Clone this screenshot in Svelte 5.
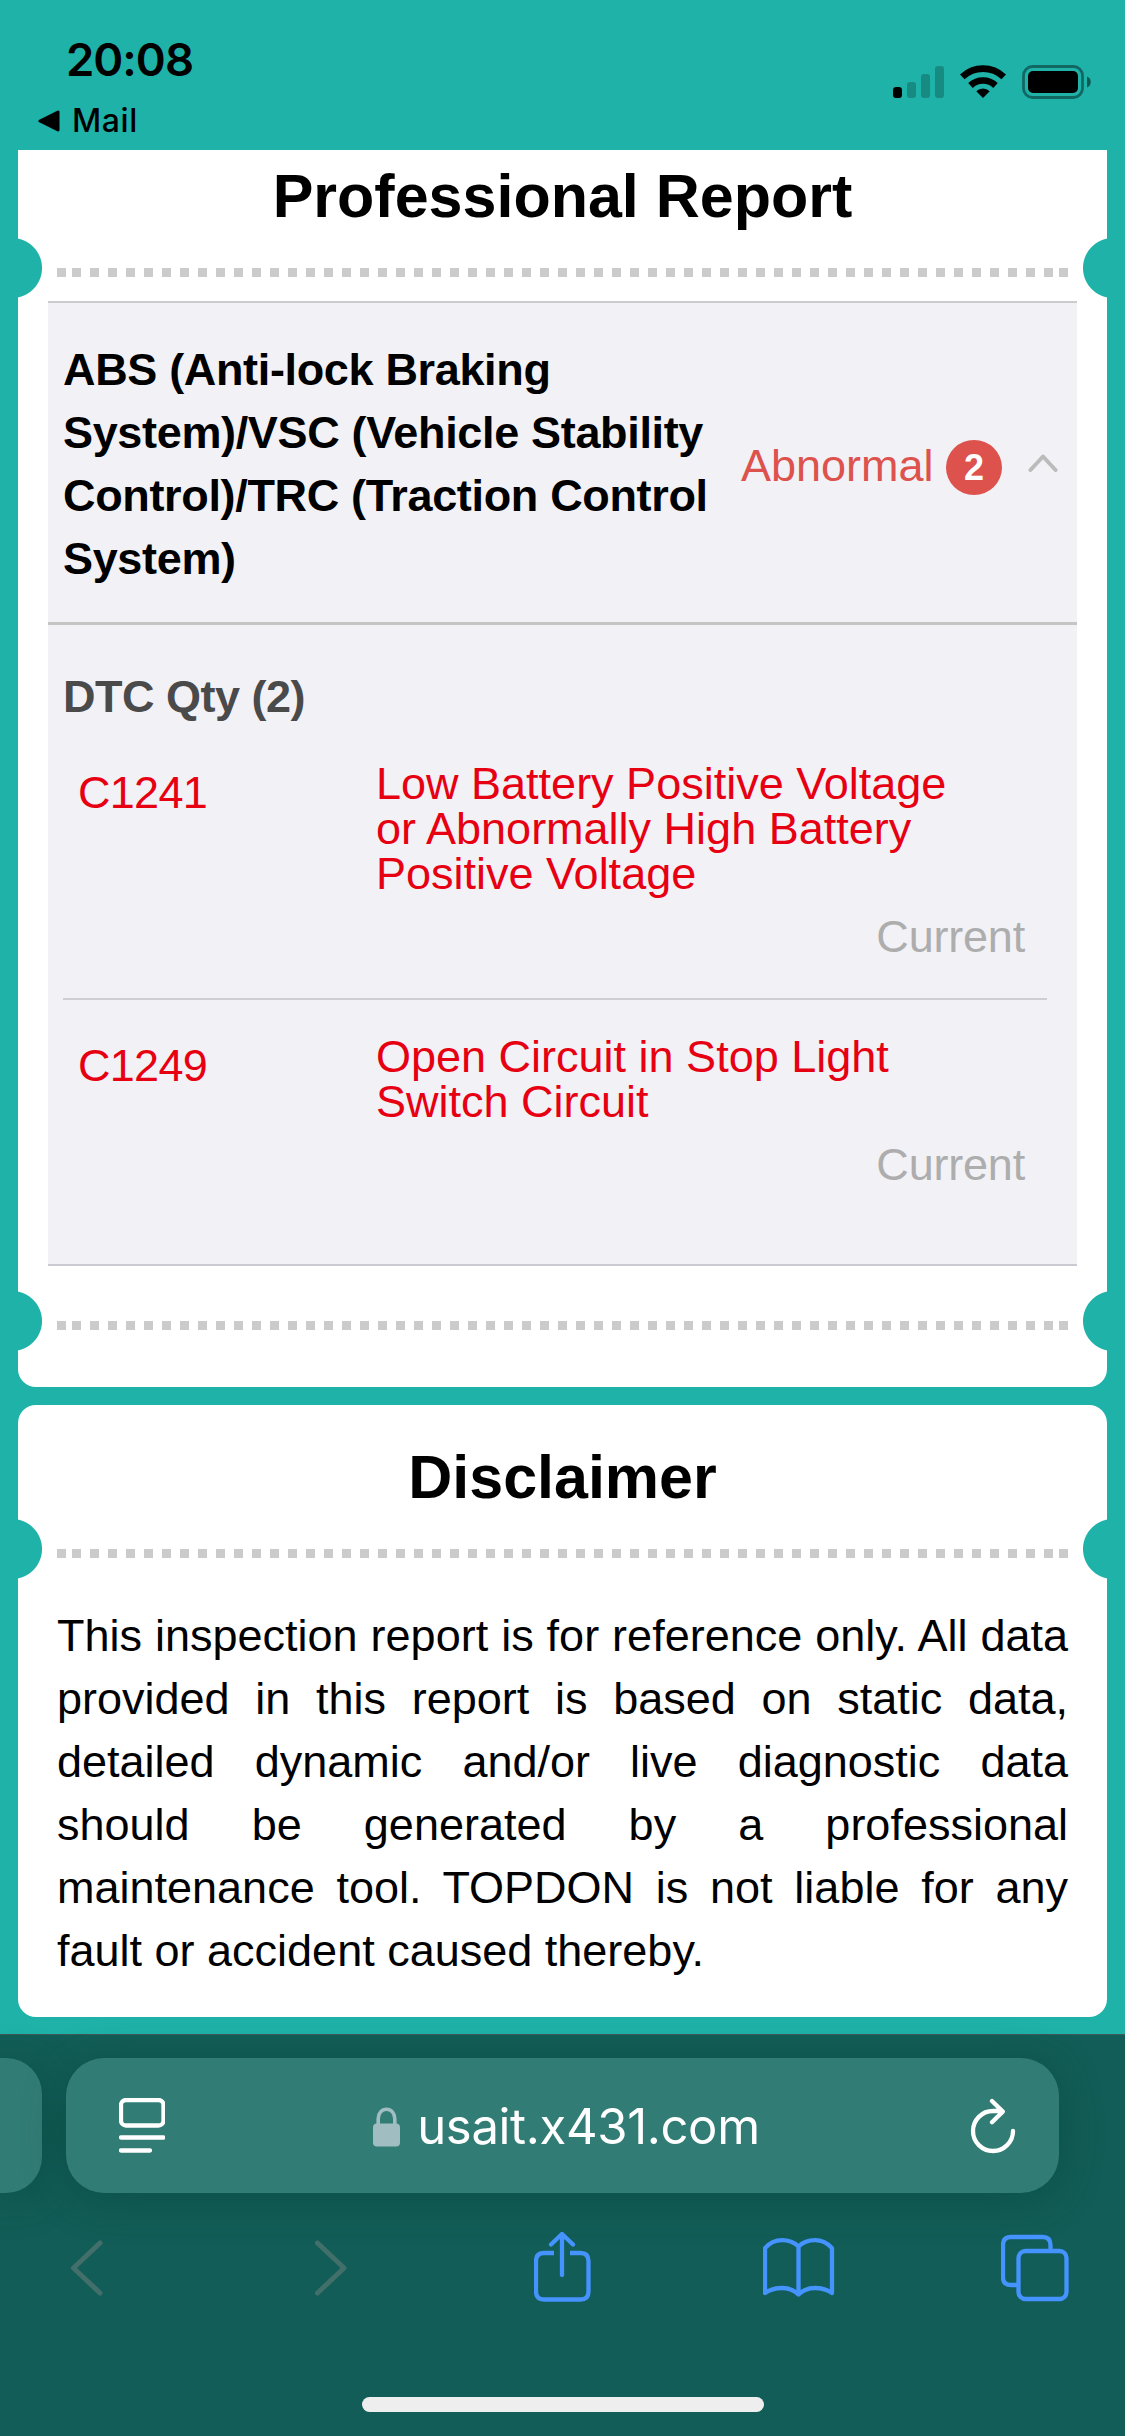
<script lang="ts">
	interface Dtc {
		code: string;
		description: string;
		status: string;
	}

	let expanded = $state(true);

	const system =
		'ABS (Anti-lock Braking System)/VSC (Vehicle Stability Control)/TRC (Traction Control System)';

	const dtcs: Dtc[] = [
		{
			code: 'C1241',
			description: 'Low Battery Positive Voltage or Abnormally High Battery Positive Voltage',
			status: 'Current'
		},
		{
			code: 'C1249',
			description: 'Open Circuit in Stop Light Switch Circuit',
			status: 'Current'
		}
	];
</script>

{#snippet perforation()}
	<div class="perforation">
		<div class="dots"></div>
	</div>
{/snippet}

<div class="screen">
	<header class="status-bar">
		<div class="status-left">
			<div class="time">20:08</div>
			<div class="back-to">
				<svg width="22" height="22" viewBox="0 0 22 22">
					<path d="M2 11 20 2v18z" stroke="#000" stroke-width="3" stroke-linejoin="round" />
				</svg>
				<span>Mail</span>
			</div>
		</div>
		<svg class="status-icons" width="200" height="36" viewBox="892 64 200 36">
			<rect x="893" y="87" width="9" height="11" rx="3" />
			<g opacity="0.22">
				<rect x="907" y="82" width="9" height="16" rx="3" />
				<rect x="921" y="74" width="9" height="24" rx="3" />
				<rect x="935" y="66" width="9" height="32" rx="3" />
			</g>
			<g fill="none" stroke="#000" stroke-width="6.6">
				<path d="M962.3 76.9a30 30 0 0 1 41.4 0" />
				<path d="M970.5 85.5a18.2 18.2 0 0 1 25 0" />
			</g>
			<path d="M976.3 91.2a9.7 9.7 0 0 1 13.4 0L983 98z" />
			<rect
				x="1023.5"
				y="66.5"
				width="59"
				height="31"
				rx="9"
				fill="none"
				stroke="#000"
				stroke-opacity="0.42"
				stroke-width="2.8"
			/>
			<rect x="1028" y="71" width="50" height="22" rx="5" />
			<path d="M1087 76.5a5.9 5.9 0 0 1 0 11z" opacity="0.5" />
		</svg>
	</header>

	<main>
		<section class="card report">
			<h1>Professional Report</h1>
			{@render perforation()}
			<div class="panel">
				<button type="button" class="system" onclick={() => (expanded = !expanded)}>
					<span class="system-name">{system}</span>
					<span class="abnormal">Abnormal</span>
					<span class="count">{dtcs.length}</span>
					<svg class="chevron" class:closed={!expanded} width="30" height="20" viewBox="0 0 30 20">
						<path d="M2.5 17 15 3.5 27.5 17" />
					</svg>
				</button>
				{#if expanded}
					<div class="details">
						<h2>DTC Qty ({dtcs.length})</h2>
						{#each dtcs as dtc (dtc.code)}
							<div class="dtc">
								<span class="code">{dtc.code}</span>
								<span class="description">{dtc.description}</span>
								<span class="state">{dtc.status}</span>
							</div>
						{/each}
					</div>
				{/if}
			</div>
			{@render perforation()}
		</section>

		<section class="card disclaimer">
			<h1>Disclaimer</h1>
			{@render perforation()}
			<p>
				This inspection report is for reference only. All data provided in this report is based on
				static data, detailed dynamic and/or live diagnostic data should be generated by a
				professional maintenance tool. TOPDON is not liable for any fault or accident caused
				thereby.
			</p>
		</section>
	</main>

	<footer class="browser">
		<div class="tabs">
			<div class="tab previous"></div>
			<div class="tab address">
				<svg width="46" height="56" viewBox="0 0 46 56" class="white">
					<rect x="2" y="2" width="42.5" height="25.5" rx="5" />
					<path d="M2 39.5h42.5M2 52.5h29" />
				</svg>
				<div class="url">
					<svg width="27" height="40" viewBox="0 0 27 40">
						<path d="M5.2 18v-6.5a8.3 9.3 0 0 1 16.6 0V18" class="shackle" />
						<rect y="16.5" width="27" height="23" rx="4" fill="#a0bdc2" />
					</svg>
					<span>usait.x431.com</span>
				</div>
				<svg width="46" height="56" viewBox="970 2095 46 56" class="white">
					<path d="M1013 2128a20 20 0 1 1-20-20h9M992 2098l10.8 10.6-10.8 10.6" />
				</svg>
			</div>
		</div>
		<nav>
			<svg class="disabled" width="32" height="72" viewBox="71 2232 32 72">
				<path d="M100 2243 73.5 2268l26.5 25" />
			</svg>
			<svg class="disabled" width="32" height="72" viewBox="315 2232 32 72">
				<path d="M317.5 2243 344 2268l-26.5 25" />
			</svg>
			<svg width="57" height="72" viewBox="534 2232 57 72">
				<path
					d="M554 2253h-10q-8 0-8 8v30.5q0 8 8 8h36.500q8 0 8-8V2261q0-8-8-8H570"
					stroke-linecap="butt"
				/>
				<path d="M562 2234v41M551 2244.500l11-10.500 11 10.500" />
			</svg>
			<svg width="72" height="72" viewBox="763 2232 72 72">
				<path
					d="M798.500 2246.500v48M798.500 2246.500q-6.500-6.300-16.500-6.300t-17 8V2293q7-5 17-5t16.500 6.500q6.500-6.500 16.500-6.500t17 5v-44.800q-7-8-17-8t-16.500 6.300"
				/>
			</svg>
			<svg width="69" height="72" viewBox="1001 2232 69 72">
				<rect x="1018.500" y="2251" width="48" height="48" rx="7" />
				<path d="M1050.500 2250v-5q0-8-8-8H1011q-8 0-8 8v32.500q0 7.500 8 7.500h6" />
			</svg>
		</nav>
		<div class="home-indicator"></div>
	</footer>
</div>

<style>
	:global(body) {
		margin: 0;
		background: #1eb2a8;
	}

	.screen {
		display: flex;
		flex-direction: column;
		width: 1125px;
		height: 2436px;
		overflow: hidden;
		background: #1eb2a8;
		color: #000;
		font-family: 'Liberation Sans', Arial, sans-serif;
		font-size: 45px;
	}

	h1,
	h2,
	p {
		margin: 0;
	}

	svg {
		display: block;
		flex: none;
	}

	.status-bar {
		display: flex;
		justify-content: space-between;
		align-items: flex-start;
		height: 150px;
		box-sizing: border-box;
		padding: 0 33px 0 38px;
		font-family: Inter, sans-serif;
	}

	.time {
		padding: 32px 0 0 28px;
		font-size: 45.5px;
		font-weight: 600;
		line-height: 56px;
		letter-spacing: -1px;
	}

	.back-to {
		display: flex;
		align-items: center;
		gap: 12px;
		padding-top: 13px;
		font-size: 32px;
		font-weight: 500;
		line-height: 40px;
		letter-spacing: 0.6px;
	}

	.status-icons {
		margin-top: 64px;
	}

	main {
		display: flex;
		flex-direction: column;
		gap: 18px;
		height: 1884px;
		padding: 0 18px;
		box-sizing: border-box;
	}

	.card {
		background: #fff;
		overflow: hidden;
	}

	.report {
		height: 1237px;
		border-radius: 0 0 18px 18px;
	}

	.disclaimer {
		height: 612px;
		border-radius: 18px;
	}

	h1 {
		height: 88px;
		font-size: 61px;
		line-height: 92px;
		text-align: center;
	}

	.disclaimer h1 {
		padding-top: 26px;
	}

	/* ticket edge: a half-moon cut at each side and a dotted line between */
	.perforation {
		display: flex;
		height: 60px;
		padding: 0 39px;
		background:
			radial-gradient(circle at -6px 30px, #1eb2a8 29.5px, transparent 30.5px),
			radial-gradient(circle at 1095px 30px, #1eb2a8 29.5px, transparent 30.5px);
	}

	.dots {
		flex: 1;
		height: 9px;
		margin-top: 30px;
		background:
			linear-gradient(#cbcbcb, #cbcbcb) 0 0 / 9px 9px no-repeat,
			linear-gradient(#cbcbcb, #cbcbcb) 100% 0 / 9px 9px no-repeat,
			repeating-linear-gradient(90deg, #cbcbcb 0 9px, transparent 9px 18px) 15px 0 / 981px 9px
				no-repeat;
	}

	.panel {
		height: 965px;
		margin: 3px 30px 25px;
		box-sizing: border-box;
		border-top: 2px solid #cbcacd;
		border-bottom: 2px solid #cbcad0;
		background: #f2f1f6;
	}

	.system {
		display: flex;
		align-items: center;
		width: 100%;
		height: 322px;
		padding: 3px 18px 0 15px;
		border: none;
		border-bottom: 3px solid #c5c5c5;
		background: none;
		color: inherit;
		font: inherit;
		text-align: left;
	}

	.system-name {
		width: 663px;
		font-weight: 700;
		line-height: 63px;
		letter-spacing: -0.34px;
	}

	.abnormal {
		width: 205px;
		margin-left: 15px;
		padding-top: 3px;
		color: #dd524d;
		white-space: nowrap;
	}

	.count {
		width: 56px;
		height: 55px;
		margin-top: 6px;
		border-radius: 50%;
		background: #dd524d;
		color: #fff;
		font-size: 36px;
		font-weight: 700;
		line-height: 55px;
		text-align: center;
	}

	.chevron {
		margin: 0 0 3px 26px;
		fill: none;
		stroke: #bbb;
		stroke-width: 4;
		stroke-linecap: round;
		stroke-linejoin: round;
	}

	.chevron.closed {
		transform: rotate(180deg);
	}

	.details {
		padding: 40px 30px 0 15px;
	}

	h2 {
		color: #4a4a4a;
		font-size: 45px;
		line-height: 63px;
		letter-spacing: -0.5px;
	}

	.dtc {
		display: grid;
		grid-template-columns: 298px 590px 1fr;
		padding: 33px 22px 39px 15px;
		line-height: 45px;
	}

	.dtc + .dtc {
		padding-top: 34px;
		border-top: 2px solid #cfced3;
	}

	.code {
		padding-top: 9px;
		color: #e60012;
		letter-spacing: -0.7px;
	}

	.description {
		color: #e60012;
	}

	.state {
		grid-column: 1 / -1;
		justify-self: end;
		padding-top: 18px;
		color: #adadad;
		letter-spacing: -0.2px;
	}

	p {
		padding: 25px 39px 0;
		line-height: 63px;
		text-align: justify;
	}

	.browser {
		height: 402px;
		box-sizing: border-box;
		border-top: 1px solid #3f5957;
		background: #125d57;
	}

	.browser svg {
		fill: none;
		stroke: #4593ff;
		stroke-width: 4.3;
		stroke-linecap: round;
		stroke-linejoin: round;
	}

	.tabs {
		display: flex;
		gap: 24px;
		padding-top: 23px;
	}

	.tab {
		flex: none;
		height: 135px;
		box-sizing: border-box;
		background: #317c75;
		box-shadow: 0 6px 42px rgba(0, 60, 50, 0.4);
	}

	.previous {
		width: 42px;
		border-radius: 0 36px 36px 0;
	}

	.address {
		display: flex;
		justify-content: space-between;
		align-items: center;
		width: 993px;
		padding: 0 43px 0 53px;
		border-radius: 38px;
	}

	.browser .white {
		stroke: #fff;
	}

	.url {
		display: flex;
		align-items: center;
		gap: 17px;
		padding: 2px 2px 0 0;
		color: #fff;
		font-family: Inter, sans-serif;
		font-size: 49px;
		line-height: 60px;
		letter-spacing: -0.35px;
	}

	.browser .url svg {
		stroke: none;
	}

	.browser .url .shackle {
		stroke: #a0bdc2;
		stroke-width: 3.6;
	}

	nav {
		display: grid;
		grid-template-columns: 244px 219px 229px 238px 69px;
		padding: 39px 0 0 71px;
	}

	.browser .disabled {
		stroke: #426f6a;
		stroke-width: 5;
	}

	.home-indicator {
		width: 402px;
		height: 15px;
		margin: 93px auto 0;
		border-radius: 8px;
		background: #eee;
	}
</style>
